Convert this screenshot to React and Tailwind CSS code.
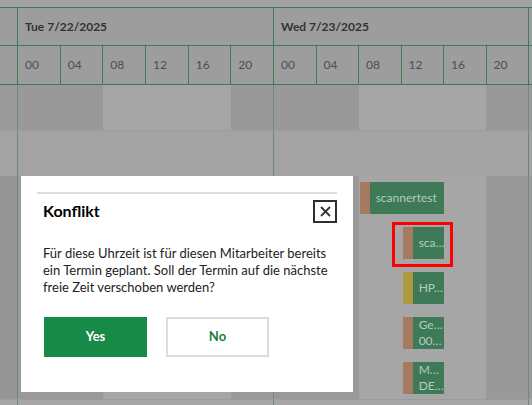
import React from 'react';

const HOURS = ['00', '04', '08', '12', '16', '20'];

const DAYS = [
  { label: 'Tue 7/22/2025', width: 'w-[256px]' },
  { label: 'Wed 7/23/2025', width: 'w-[255px]' },
];

// Events shown in the Wednesday work-hours block of the third row
const EVENTS = [
  { lines: ['scannertest'], strip: 'bg-[#a67961]', wide: true },
  { lines: ['sca…'], strip: 'bg-[#a67961]' },
  { lines: ['HP…'], strip: 'bg-[#ae9840]' },
  { lines: ['Ge…', '00…'], strip: 'bg-[#a67961]' },
  { lines: ['M…', 'DE…'], strip: 'bg-[#a67961]' },
];

const Event = ({ lines, strip, wide }) => (
  <div className={`flex h-[32px] ${wide ? 'w-[84px]' : 'w-[41px]'} bg-[#3f7a58]`}>
    <div className={`w-[10px] shrink-0 ${strip}`} />
    <div className="flex min-w-0 flex-1 flex-col justify-center overflow-hidden whitespace-nowrap pl-[6px] text-[12px] leading-[16px] text-[#b2cdbf]">
      {lines.map((line) => (
        <span key={line}>{line}</span>
      ))}
    </div>
  </div>
);

// One day cell in a body row: night / work hours / evening shading
const DayShading = ({ width, children }) => (
  <div className={`${width} grid h-full shrink-0 grid-cols-[8fr_12fr_4fr] border-l border-[#6d8a78]`}>
    <div className="bg-[#999999]" />
    <div className="bg-[#a6a6a6]">{children}</div>
    <div className="bg-[#999999]" />
  </div>
);

const CloseIcon = () => (
  <svg width="11" height="11" viewBox="0 0 11 11" fill="none">
    <path d="M1 1L10 10M10 1L1 10" stroke="#333333" strokeWidth="1.8" />
  </svg>
);

export default function App() {
  return (
    <div className="relative h-[405px] w-[532px] overflow-hidden bg-[#a4a4a4] font-['Lato',sans-serif]">
      {/* Header */}
      <div className="h-[8px] border-b border-[#3d7a55] bg-[#a3a3a3]" />
      <div className="flex h-[38px] border-b border-[#3d7a55] bg-[#9d9d9d]">
        <div className="w-[17px] shrink-0" />
        {DAYS.map((day) => (
          <div
            key={day.label}
            className={`${day.width} flex shrink-0 items-center border-l border-[#3d7a55] pl-[7px] text-[12px] font-bold text-[#333333]`}
          >
            {day.label}
          </div>
        ))}
        <div className="flex-1 border-l border-[#3d7a55]" />
      </div>
      <div className="flex h-[39px] border-b border-[#3d7a55] bg-[#9d9d9d]">
        <div className="w-[17px] shrink-0" />
        {DAYS.map((day) => (
          <div key={day.label} className={`${day.width} flex shrink-0 border-l border-[#3d7a55]`}>
            {HOURS.map((hour, i) => (
              <div
                key={hour}
                className={`flex flex-1 items-center pl-[7px] text-[12px] text-[#45505a] ${i > 0 ? 'border-l border-[#3d7a55]' : ''}`}
              >
                {hour}
              </div>
            ))}
          </div>
        ))}
        <div className="flex-1 border-l border-[#3d7a55]" />
      </div>

      {/* Body rows */}
      <div className="flex h-[46px] border-b border-[#9c9c9c]">
        <div className="w-[17px] shrink-0 bg-[#9b9b9b]" />
        {DAYS.map((day) => (
          <DayShading key={day.label} width={day.width} />
        ))}
        <div className="flex-1 border-l border-[#6d8a78] bg-[#999999]" />
      </div>
      <div className="flex h-[45px] bg-[#a3a3a3]">
        <div className="w-[17px] shrink-0" />
        {DAYS.map((day) => (
          <div key={day.label} className={`${day.width} shrink-0 border-l border-[#6d8a78]`} />
        ))}
        <div className="flex-1 border-l border-[#6d8a78]" />
      </div>
      <div className="flex h-[224px] border-b border-[#9c9c9c]">
        <div className="w-[17px] shrink-0 bg-[#959595]" />
        <DayShading width={DAYS[0].width} />
        <DayShading width={DAYS[1].width}>
          <div className="flex w-[85px] flex-col items-end gap-[13px] pt-[6px]">
            {EVENTS.map((ev) => (
              <Event key={ev.lines.join()} {...ev} />
            ))}
          </div>
        </DayShading>
        <div className="flex-1 border-l border-[#6d8a78] bg-[#999999]" />
      </div>
      <div className="flex h-[20px] bg-[#a6a6a6]">
        <div className="w-[17px] shrink-0" />
        <div className="w-[256px] shrink-0 border-l border-[#6d8a78]" />
        <div className="w-[255px] shrink-0 border-l border-[#6d8a78]" />
        <div className="flex-1 border-l border-[#6d8a78]" />
      </div>

      {/* Conflict dialog */}
      <div className="absolute left-[21px] top-[176px] h-[216px] w-[332px] bg-white px-4 pt-4">
        <div className="h-[2px] bg-[#dedede]" />
        <div className="mt-[5px] flex items-center justify-between pl-[6px]">
          <h2 className="text-[16px] font-bold text-black">Konflikt</h2>
          <button className="flex h-[23px] w-[24px] items-center justify-center border-2 border-[#2e2e2e] bg-white">
            <CloseIcon />
          </button>
        </div>
        <p className="mt-[22px] pl-[6px] text-[13px] leading-[17px] text-[#222222]">
          Für diese Uhrzeit ist für diesen Mitarbeiter bereits
          <br />
          ein Termin geplant. Soll der Termin auf die nächste
          <br />
          freie Zeit verschoben werden?
        </p>
        <div className="mt-[21px] flex gap-[19px] pl-[7px]">
          <button className="h-[40px] w-[103px] bg-[#188a47] text-[13px] font-bold text-white">Yes</button>
          <button className="h-[40px] w-[103px] border-2 border-[#dcdcdc] bg-white text-[13px] font-bold text-[#17803f]">
            No
          </button>
        </div>
      </div>

      {/* Highlight marker */}
      <div className="absolute left-[392px] top-[222px] h-[45px] w-[61px] border-[3px] border-[#ff0000]" />
    </div>
  );
}
